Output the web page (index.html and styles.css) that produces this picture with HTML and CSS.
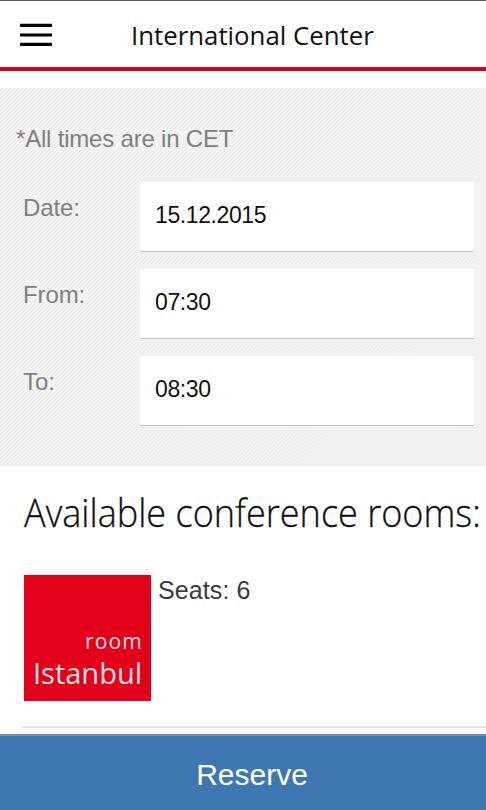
FILE: index.html
```html
<!DOCTYPE html>
<html lang="en">
<head>
<meta charset="utf-8">
<title>International Center</title>
<link rel="stylesheet" href="styles.css">
</head>
<body>
<header class="topbar">
  <svg class="menu" width="32" height="24" viewBox="0 0 32 24" aria-hidden="true"><path d="M0 2.3h32M0 12h32M0 21.3h32" stroke="#000" stroke-width="3.2"/></svg>
  <h1 class="title"><span>International Center</span></h1>
</header>
<main>
  <section class="filters">
    <p class="note">*All times are in CET</p>
    <div class="row"><div class="label">Date:</div><div class="field">15.12.2015</div></div>
    <div class="row"><div class="label">From:</div><div class="field">07:30</div></div>
    <div class="row"><div class="label">To:</div><div class="field">08:30</div></div>
  </section>
  <h2 class="heading"><span>Available conference rooms:</span></h2>
  <article class="room">
    <div class="tile"><span class="kind">room</span><span class="name">Istanbul</span></div>
    <div class="seats">Seats: 6</div>
  </article>
</main>
<footer class="reserve">Reserve</footer>
</body>
</html>
```

FILE: styles.css
```css
* { box-sizing: border-box; }
body {
  margin: 0;
  width: 486px;
  height: 810px;
  overflow: hidden;
  display: flex;
  flex-direction: column;
  background: #fff;
  color: #111;
  font-family: "Liberation Sans", Arial, sans-serif;
}
h1, h2, p { margin: 0; font-weight: 400; }
.topbar {
  height: 71px;
  flex: none;
  display: flex;
  padding-left: 20px;
  border-top: 1px solid #5e5a5e;
  border-bottom: 4px solid #d7001c;
}
.menu { margin-top: 22px; }
.title {
  margin: 16px 0 0 79px;
  font: 400 26px/36px "Open Sans", "Noto Sans", sans-serif;
  white-space: nowrap;
}
.title span { display: inline-block; transform-origin: 0 50%; transform: scaleX(0.992); }
main { flex: 1; }
.filters {
  height: 378px;
  margin-top: 17px;
  padding: 34px 12px 0 23px;
  background: repeating-linear-gradient(135deg, #f4f4f4 0 1.4px, #e9e9e9 2.1px, #f4f4f4 2.83px);
  color: #808080;
}
.note { margin: 0 0 26px -7px; font-size: 24px; line-height: 34px; letter-spacing: -0.2px; }
.row { display: flex; height: 70px; margin-bottom: 17px; }
.label { width: 117px; padding-top: 9px; font-size: 24px; line-height: 34px; letter-spacing: -0.1px; }
.field {
  flex: 1;
  padding-left: 15px;
  background: #fff;
  border-bottom: 1px solid #c6c6c6;
  color: #111;
  font-size: 23px;
  letter-spacing: -0.4px;
  line-height: 67px;
}
.heading {
  height: 110px;
  padding: 20px 0 0 24px;
  font: 300 38px/52px "Open Sans", "Noto Sans", sans-serif;
  -webkit-text-stroke: 0.3px #111;
  white-space: nowrap;
}
.heading span { display: inline-block; transform-origin: 0 50%; transform: scaleX(0.949); }
.room {
  display: flex;
  height: 153px;
  margin: -1px 0 0 22px;
  padding-left: 2px;
  border-bottom: 2px solid #dfe4eb;
}
.tile {
  display: flex;
  flex-direction: column;
  align-items: flex-end;
  width: 127px;
  height: 126px;
  padding: 52px 9px 0 0;
  background: #e2001a;
  color: #ffe3e3;
  font-family: "Open Sans", "Noto Sans", sans-serif;
}
.kind { font-size: 21px; line-height: 28px; letter-spacing: 1.2px; margin-right: -1px; }
.name { font-size: 29px; line-height: 36px; }
.seats { margin-left: 7px; margin-top: -1px; font-size: 25px; line-height: 32px; letter-spacing: 0.1px; color: #3b3b3b; }
.reserve {
  flex: none;
  height: 76px;
  border-top: 2px solid #6d91b5;
  background: #3f77b2;
  color: #fff;
  font-size: 30px;
  line-height: 77px;
  padding-left: 18px;
  text-align: center;
}
```
